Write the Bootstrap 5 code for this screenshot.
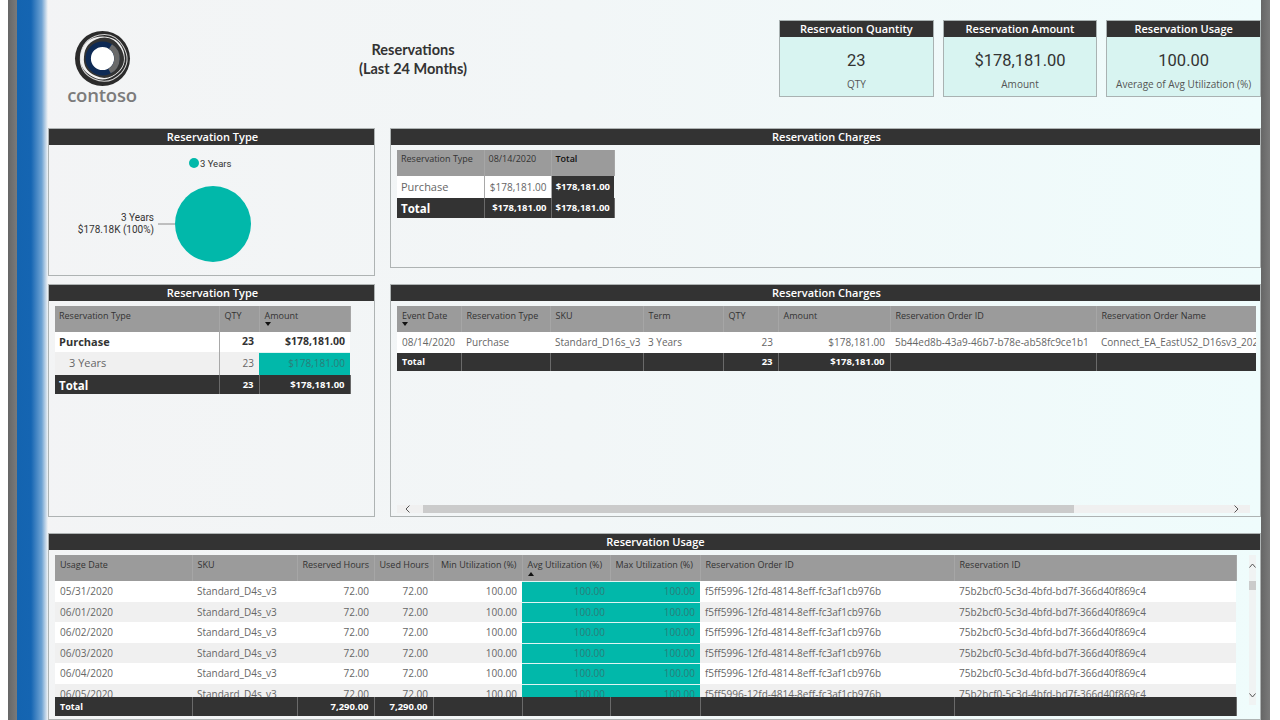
<!DOCTYPE html>
<html lang="en">
<head>
  <meta charset="UTF-8" />
  <title>Reservations</title>
  <meta name="viewport" content="width=device-width, initial-scale=1" />
  <link href="https://cdn.jsdelivr.net/npm/bootstrap@5.3.3/dist/css/bootstrap.min.css" rel="stylesheet" />
  <style>
    html, body {
      height: 720px;
      overflow: hidden;
    }

    body {
      background-color: #fff;
      font-family: "Open Sans", "Noto Sans", sans-serif;
      color: #333;
    }

    .edge-white {
      width: 8px;
      flex: none;
    }

    .edge-gray {
      width: 9px;
      background: linear-gradient(to right, #666, #7a7a7a);
      flex: none;
    }

    .report-page {
      width: 1244px;
      height: 720px;
      flex: none;
      background: linear-gradient(to right, #f3f4f5 0%, #f2f6f7 45%, #effcfc 100%);
    }

    .blue-rail {
      width: 31px;
      flex: none;
      background: linear-gradient(to right, #1464b0 0%, #1565b2 45%, #6fa3d3 80%, rgba(243, 244, 245, 0) 100%);
    }

    .report-main {
      width: 1213px;
      flex: none;
    }

    .report-top {
      height: 128px;
      padding-top: 20px;
    }

    .logo-box {
      width: 130px;
      padding-left: 19px;
      padding-top: 11px;
    }

    .logo-word {
      font-size: 18.5px;
      font-weight: 600;
      line-height: 16px;
      color: #7b7b7b;
      width: 70px;
      text-align: center;
      letter-spacing: -0.2px;
    }

    .report-title {
      width: 470px;
      padding-top: 20px;
      font-family: Lato, "Open Sans", sans-serif;
      font-size: 14.5px;
      font-weight: 700;
      line-height: 19px;
      color: #333;
    }

    .kpi-row {
      gap: 9px;
    }

    .kpi-tile {
      width: 154.67px;
      height: 77px;
      border: 1px solid #a9b2b2;
      background-color: #d8f4f1;
    }

    .kpi-head {
      height: 16px;
      line-height: 16px;
      background-color: #333;
      color: #fff;
      font-size: 11px;
      font-weight: 600;
      text-align: center;
    }

    .kpi-value {
      font-family: Roboto, sans-serif;
      font-size: 16.5px;
      line-height: 20px;
      margin-top: 14px;
      color: #333;
    }

    .kpi-label {
      font-size: 10px;
      line-height: 14px;
      margin-top: 6px;
      color: #555;
    }

    .report-grid {
      display: grid;
      grid-template-columns: 327px 871px;
      grid-template-rows: 156px 249px 187px;
      column-gap: 15px;
    }

    .vis-panel {
      border: 1px solid #aeb3b3;
      overflow: hidden;
    }

    .vis-panel-wide {
      grid-column: 1 / 3;
    }

    .h-148 { height: 148px; }
    .h-140 { height: 140px; }
    .h-233 { height: 233px; }
    .h-187 { height: 187px; }

    .vis-head {
      height: 16px;
      line-height: 16px;
      padding-left: 2px;
      background-color: #333;
      color: #fff;
      font-size: 11px;
      font-weight: 600;
      text-align: center;
    }

    .vis-body {
      padding: 5px 6px 0;
    }

    .pie-chart text {
      font-family: Roboto, sans-serif;
      font-size: 10px;
      fill: #333;
    }

    .pie-chart text.pie-legend {
      font-size: 9.5px;
    }

    table.pbi-table {
      table-layout: fixed;
      border-collapse: collapse;
      margin: 0;
      font-size: 10px;
      color: #666;
    }

    table.pbi-table th, table.pbi-table td {
      padding: 0 5px;
      border-bottom-width: 0;
      white-space: nowrap;
      overflow: hidden;
      vertical-align: middle;
    }

    table.pbi-table thead th {
      height: 26px;
      background-color: #9b9b9b;
      color: #333;
      font-size: 9px;
      font-weight: 400;
      vertical-align: top;
      padding-top: 3px;
      line-height: 13px;
      border-right: 1px solid #a6a6a6;
    }

    table.pbi-table tbody td {
      background-color: #fff;
    }

    table.pbi-table tr.total-row td {
      height: 19px;
      background-color: #333;
      color: #fff;
      font-size: 9.5px;
      font-weight: 700;
      border-right: 1px solid #6a6a6a;
    }

    table.pbi-table .num {
      text-align: right;
    }

    table.pbi-table thead .head-total {
      color: #111;
      font-weight: 600;
    }

    table.pbi-table td.grand {
      background-color: #333;
      color: #fff;
      font-weight: 700;
      font-size: 9.5px;
    }

    table.pbi-table .big-label {
      font-size: 11px;
    }

    table.pbi-table tr.total-row td.big-total {
      font-size: 11.5px;
      padding-top: 2px;
    }

    table.pbi-table tr.total-row td.small-total {
      font-size: 9px;
    }

    table.pbi-table .line-right {
      border-right: 1px solid #a8a8a8;
    }

    table.pbi-table .strong-cell {
      color: #333;
      font-weight: 700;
    }

    table.pbi-table td.strong-cell.num {
      font-size: 10.5px;
    }

    table.pbi-table tr.alt-row td {
      background-color: #f0f0f0;
    }

    table.pbi-table td.teal-cell,
    table.pbi-table tr.alt-row td.teal-cell {
      background-color: #01b8aa;
      color: #2a7d78;
      box-shadow: inset 0 1px 0 #dff5f3;
    }

    .charge-matrix { width: 217px; }
    .charge-matrix col:nth-child(1) { width: 87px; }
    .charge-matrix col:nth-child(2) { width: 67px; }
    .charge-matrix col:nth-child(3) { width: 63px; }
    table.charge-matrix th, table.charge-matrix td { padding: 0 4px; }
    table.charge-matrix thead th { padding-top: 2px; }
    .charge-matrix .row-purchase td { height: 22px; }
    table.charge-matrix tr.total-row td { height: 20px; }

    .type-matrix { width: 295px; }
    .type-matrix col:nth-child(1) { width: 164px; }
    .type-matrix col:nth-child(2) { width: 40px; }
    .type-matrix col:nth-child(3) { width: 91px; }
    table.type-matrix th:first-child, table.type-matrix td:first-child { padding-left: 4px; }
    table.type-matrix td.child-label { padding-left: 14px; }
    .type-matrix .row-purchase td { height: 20px; }
    .type-matrix .row-years td { height: 23px; }

    .detail-clip {
      width: 859px;
      overflow: hidden;
    }

    .detail-table { width: 859px; }
    .detail-table col:nth-child(1) { width: 64px; }
    .detail-table col:nth-child(2) { width: 89px; }
    .detail-table col:nth-child(3) { width: 93px; }
    .detail-table col:nth-child(4) { width: 80px; }
    .detail-table col:nth-child(5) { width: 55px; }
    .detail-table col:nth-child(6) { width: 112px; }
    .detail-table col:nth-child(7) { width: 206px; }
    .detail-table col:nth-child(8) { width: 160px; }
    .detail-table .row-detail td { height: 21px; }
    table.detail-table tr.total-row td { height: 18px; }

    .sort-down, .sort-up {
      display: block;
      width: 0;
      height: 0;
      border-left: 3.5px solid transparent;
      border-right: 3.5px solid transparent;
    }

    .sort-down { border-top: 4px solid #111; }
    .sort-up { border-bottom: 4px solid #111; margin-top: 1px; }

    .hscroll-bar {
      width: 853px;
      height: 8px;
      margin-top: 134px;
      background-color: #f0f0f0;
    }

    .hscroll-left { margin-left: 8px; }
    .hscroll-right { margin-right: 11px; }

    .hscroll-thumb {
      width: 651px;
      height: 8px;
      margin-left: 12px;
      background-color: #cbcbcb;
    }

    .usage-wrap {
      width: 1181px;
    }

    .usage-clip {
      height: 116px;
      overflow: hidden;
    }

    .usage-table { width: 1181px; }
    .usage-table col:nth-child(1) { width: 137px; }
    .usage-table col:nth-child(2) { width: 105px; }
    .usage-table col:nth-child(3) { width: 77px; }
    .usage-table col:nth-child(4) { width: 59px; }
    .usage-table col:nth-child(5) { width: 89px; }
    .usage-table col:nth-child(6) { width: 88px; }
    .usage-table col:nth-child(7) { width: 90px; }
    .usage-table col:nth-child(8) { width: 254px; }
    .usage-table col:nth-child(9) { width: 282px; }

    .usage-table tbody td {
      height: 20.5px;
      line-height: 14px;
    }

    table.usage-table thead th.max-head {
      padding-right: 7px;
    }

    .vscroll-bar {
      width: 7px;
      height: 150px;
      margin-left: 13px;
      padding-top: 8px;
      padding-bottom: 7px;
      background-color: #f0f3f3;
    }

    .vscroll-thumb {
      width: 7px;
      height: 9px;
      margin-top: 13px;
      background-color: #cbcbcb;
    }
  </style>
</head>
<body class="d-flex">
  <div class="edge-white"></div>
  <div class="edge-gray"></div>
  <div class="report-page d-flex">
    <div class="blue-rail"></div>
    <div class="report-main">

      <div class="report-top d-flex">
        <div class="logo-box">
          <svg width="71" height="56" viewBox="0 0 71 56" class="d-block">
            <g transform="translate(35.5 27.5)">
              <circle r="27.5" fill="#2b2b2b"/>
              <path d="M0 -24Q17 -24 22 -9Q27 8 13 18Q0 27 -13 18Q-27 8 -22 -9Q-17 -24 0 -24Z" fill="none" stroke="#d4d4d4" stroke-width="1" transform="rotate(60)"/>
              <path d="M0 -22Q16 -22 21 -8Q26 8 12 17Q0 25 -12 17Q-26 8 -21 -8Q-16 -22 0 -22Z" fill="#f1f1f1"/>
              <path d="M0 -21Q15 -21 19 -8Q23 7 11 15Q0 23 -11 15Q-23 7 -19 -8Q-15 -21 0 -21Z" fill="#333" transform="rotate(60)"/>
              <circle r="14.3" fill="#fff" stroke="#0e2a55" stroke-width="5.4"/>
              <path d="M8 -12A14.3 14.3 0 0 1 7 12.5" fill="none" stroke="#6a6a6a" stroke-width="5.4"/>
            </g>
          </svg>
          <div class="logo-word">contoso</div>
        </div>
        <div class="report-title text-center">Reservations<br>(Last 24 Months)</div>
        <div class="d-flex ms-auto kpi-row">
          <div class="kpi-tile text-center">
            <div class="kpi-head">Reservation Quantity</div>
            <div class="kpi-value">23</div>
            <div class="kpi-label">QTY</div>
          </div>
          <div class="kpi-tile text-center">
            <div class="kpi-head">Reservation Amount</div>
            <div class="kpi-value">$178,181.00</div>
            <div class="kpi-label">Amount</div>
          </div>
          <div class="kpi-tile text-center">
            <div class="kpi-head">Reservation Usage</div>
            <div class="kpi-value">100.00</div>
            <div class="kpi-label">Average of Avg Utilization (%)</div>
          </div>
        </div>
      </div>

      <div class="report-grid">
        <div class="vis-panel h-148">
          <div class="vis-head">Reservation Type</div>
          <svg class="pie-chart d-block" width="325" height="130" viewBox="0 0 325 130">
            <circle cx="145" cy="18" r="5" fill="#01b8aa"/>
            <text class="pie-legend" x="151" y="21.5">3 Years</text>
            <text x="105" y="76" text-anchor="end">3 Years</text>
            <text x="105" y="88" text-anchor="end">$178.18K (100%)</text>
            <line x1="109" y1="79" x2="126" y2="79" stroke="#888" stroke-width="1"/>
            <circle cx="164" cy="79" r="38" fill="#01b8aa"/>
          </svg>
        </div>
        <div class="vis-panel h-140">
          <div class="vis-head">Reservation Charges</div>
          <div class="vis-body">
            <table class="table pbi-table charge-matrix">
              <colgroup><col><col><col></colgroup>
              <thead>
                <tr><th>Reservation Type</th><th>08/14/2020</th><th class="head-total">Total</th></tr>
              </thead>
              <tbody>
                <tr class="row-purchase"><td class="big-label line-right">Purchase</td><td class="num line-right">$178,181.00</td><td class="num grand">$178,181.00</td></tr>
                <tr class="total-row"><td class="big-total">Total</td><td class="num">$178,181.00</td><td class="num">$178,181.00</td></tr>
              </tbody>
            </table>
          </div>
        </div>

        <div class="vis-panel h-233">
          <div class="vis-head">Reservation Type</div>
          <div class="vis-body">
            <table class="table pbi-table type-matrix">
              <colgroup><col><col><col></colgroup>
              <thead>
                <tr><th>Reservation Type</th><th>QTY</th><th>Amount<span class="sort-down"></span></th></tr>
              </thead>
              <tbody>
                <tr class="row-purchase"><td class="line-right big-label strong-cell">Purchase</td><td class="num strong-cell">23</td><td class="num strong-cell">$178,181.00</td></tr>
                <tr class="alt-row row-years"><td class="line-right big-label child-label">3 Years</td><td class="num">23</td><td class="num teal-cell">$178,181.00</td></tr>
                <tr class="total-row"><td class="big-total">Total</td><td class="num">23</td><td class="num">$178,181.00</td></tr>
              </tbody>
            </table>
          </div>
        </div>
        <div class="vis-panel h-233">
          <div class="vis-head">Reservation Charges</div>
          <div class="vis-body">
            <div class="detail-clip">
              <table class="table pbi-table detail-table">
                <colgroup><col><col><col><col><col><col><col><col></colgroup>
                <thead>
                  <tr><th>Event Date<span class="sort-down"></span></th><th>Reservation Type</th><th>SKU</th><th>Term</th><th>QTY</th><th>Amount</th><th>Reservation Order ID</th><th>Reservation Order Name</th></tr>
                </thead>
                <tbody>
                  <tr class="row-detail"><td>08/14/2020</td><td>Purchase</td><td>Standard_D16s_v3</td><td>3 Years</td><td class="num">23</td><td class="num">$178,181.00</td><td>5b44ed8b-43a9-46b7-b78e-ab58fc9ce1b1</td><td>Connect_EA_EastUS2_D16sv3_2020</td></tr>
                  <tr class="total-row"><td class="small-total">Total</td><td></td><td></td><td></td><td class="num">23</td><td class="num">$178,181.00</td><td></td><td></td></tr>
                </tbody>
              </table>
            </div>
            <div class="hscroll-bar d-flex align-items-center">
              <svg class="hscroll-left" width="6" height="8" viewBox="0 0 6 8"><path d="M4.5 .5 1 4l3.5 3.5" fill="none" stroke="#555" stroke-width="1"/></svg>
              <div class="hscroll-thumb"></div>
              <svg class="hscroll-right ms-auto" width="6" height="8" viewBox="0 0 6 8"><path d="M1.5 .5 5 4 1.5 7.5" fill="none" stroke="#555" stroke-width="1"/></svg>
            </div>
          </div>
        </div>

        <div class="vis-panel vis-panel-wide h-187">
          <div class="vis-head">Reservation Usage</div>
          <div class="vis-body d-flex">
            <div class="usage-wrap">
              <table class="table pbi-table usage-table">
                <colgroup><col><col><col><col><col><col><col><col><col></colgroup>
                <thead>
                  <tr>
                    <th>Usage Date</th><th>SKU</th><th class="num">Reserved Hours</th><th class="num">Used Hours</th><th class="num">Min Utilization (%)</th>
                    <th>Avg Utilization (%)<span class="sort-up"></span></th><th class="num max-head">Max Utilization (%)</th><th>Reservation Order ID</th><th>Reservation ID</th>
                  </tr>
                </thead>
              </table>
              <div class="usage-clip">
                <table class="table pbi-table usage-table">
                  <colgroup><col><col><col><col><col><col><col><col><col></colgroup>
                  <tbody id="usageRows"></tbody>
                </table>
              </div>
              <table class="table pbi-table usage-table">
                <colgroup><col><col><col><col><col><col><col><col><col></colgroup>
                <tbody>
                  <tr class="total-row"><td class="small-total">Total</td><td></td><td class="num">7,290.00</td><td class="num">7,290.00</td><td></td><td></td><td></td><td></td><td></td></tr>
                </tbody>
              </table>
            </div>
            <div class="vscroll-bar d-flex flex-column align-items-center">
              <svg width="7" height="5" viewBox="0 0 7 5"><path d="M.5 4.5 3.5 1l3 3.5" fill="none" stroke="#555" stroke-width="1"/></svg>
              <div class="vscroll-thumb"></div>
              <svg class="mt-auto" width="7" height="5" viewBox="0 0 7 5"><path d="M.5 .5 3.5 4l3-3.5" fill="none" stroke="#555" stroke-width="1"/></svg>
            </div>
          </div>
        </div>
      </div>

    </div>
  </div>
  <div class="edge-gray"></div>

  <script src="https://cdn.jsdelivr.net/npm/bootstrap@5.3.3/dist/js/bootstrap.bundle.min.js"></script>
  <script>
    const usageDates = ['05/31/2020', '06/01/2020', '06/02/2020', '06/03/2020', '06/04/2020', '06/05/2020'];
    document.getElementById('usageRows').innerHTML = usageDates.map((d, i) => `<tr class="${i % 2 ? 'alt-row' : ''}">
      <td>${d}</td><td>Standard_D4s_v3</td><td class="num">72.00</td><td class="num">72.00</td><td class="num">100.00</td>
      <td class="num teal-cell">100.00</td><td class="num teal-cell">100.00</td>
      <td>f5ff5996-12fd-4814-8eff-fc3af1cb976b</td><td>75b2bcf0-5c3d-4bfd-bd7f-366d40f869c4</td>
    </tr>`).join('');
  </script>
</body>
</html>
